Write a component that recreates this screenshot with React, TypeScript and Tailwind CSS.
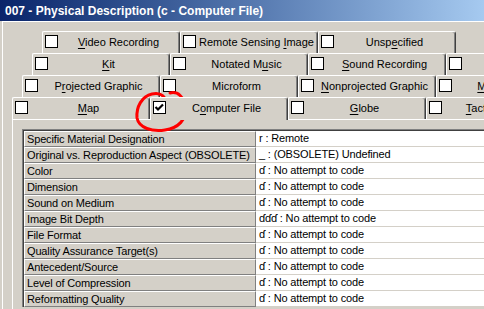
import React from "react";

type TabDef = { pre: string; u: string; post: string; active?: boolean };

const rows: TabDef[][] = [
  [
    { pre: "", u: "V", post: "ideo Recording" },
    { pre: "Remote Sensing ", u: "I", post: "mage" },
    { pre: "Unsp", u: "e", post: "cified" },
  ],
  [
    { pre: "", u: "K", post: "it" },
    { pre: "Notated M", u: "u", post: "sic" },
    { pre: "", u: "S", post: "ound Recording" },
    { pre: "", u: "T", post: "ext" },
  ],
  [
    { pre: "P", u: "r", post: "ojected Graphic" },
    { pre: "Microform", u: "", post: "" },
    { pre: "", u: "N", post: "onprojected Graphic" },
    { pre: "", u: "M", post: "otion Picture" },
  ],
  [
    { pre: "", u: "M", post: "ap" },
    { pre: "C", u: "o", post: "mputer File", active: true },
    { pre: "", u: "G", post: "lobe" },
    { pre: "", u: "T", post: "actile Material" },
  ],
];

const rowOffsets = ["ml-[39px]", "ml-[29px]", "ml-[19px]", "ml-[9px]"];

function Checkbox({ checked }: { checked?: boolean }) {
  return (
    <div className="w-[13px] h-[13px] shrink-0 border border-black bg-white flex items-center justify-center">
      {checked && (
        <svg width="11" height="11" viewBox="0 0 11 11">
          <path d="M1.5 5 L4 7.5 L9 2.5" stroke="#000" strokeWidth="2.2" fill="none" />
        </svg>
      )}
    </div>
  );
}

function Tab({ t }: { t: TabDef }) {
  return (
    <div
      className={
        "w-[138px] shrink-0 border-l border-t border-r border-l-white border-t-white border-r-[#404040] rounded-tl-[2px] rounded-tr-[3px] shadow-[inset_-1px_0_0_#808080] bg-[#D4D0C8] flex items-start pt-[3px] pl-[2px] " +
        (t.active ? "h-[23px] relative z-10" : "h-[22px]")
      }
    >
      <div className="flex items-center h-[13px] w-full">
        <Checkbox checked={t.active} />
        <span className="relative top-[1px] flex-1 text-center text-[11px] leading-[13px] text-black whitespace-nowrap">
          {t.pre}
          {t.u && <span className="underline underline-offset-[2px]">{t.u}</span>}
          {t.post}
        </span>
      </div>
    </div>
  );
}

const tableRows: [string, string][] = [
  ["Specific Material Designation", "r : Remote"],
  ["Original vs. Reproduction Aspect (OBSOLETE)", "_ : (OBSOLETE) Undefined"],
  ["Color", "ɗ : No attempt to code"],
  ["Dimension", "ɗ : No attempt to code"],
  ["Sound on Medium", "ɗ : No attempt to code"],
  ["Image Bit Depth", "ɗɗɗ : No attempt to code"],
  ["File Format", "ɗ : No attempt to code"],
  ["Quality Assurance Target(s)", "ɗ : No attempt to code"],
  ["Antecedent/Source", "ɗ : No attempt to code"],
  ["Level of Compression", "ɗ : No attempt to code"],
  ["Reformatting Quality", "ɗ : No attempt to code"],
];

export default function App() {
  return (
    <div className="relative w-[484px] h-[309px] overflow-hidden bg-[#D4D0C8] font-['Liberation_Sans','DejaVu_Sans',sans-serif] text-black">
      <div className="h-[21px] bg-gradient-to-r from-[#0A246A] to-[#A6CAF0] flex items-center pl-[5px]">
        <span className="text-white font-bold text-[12px] leading-none whitespace-nowrap">
          007 - Physical Description (c - Computer File)
        </span>
      </div>
      <div className="ml-[2px] border-l border-t border-white h-[288px] flex flex-col">
        <div className="mt-[9px] flex flex-col">
          {rows.map((r, i) => (
            <div key={i} className={"flex h-[22px] items-start " + rowOffsets[i]}>
              {r.map((t, j) => (
                <Tab key={j} t={t} />
              ))}
            </div>
          ))}
        </div>
        <div className="ml-[9px] flex-1 border-l border-t border-white pl-[9px] pt-[9px]">
          <div className="border-l border-t border-[#808080]">
            <div className="border-l border-t border-[#404040] text-[11px] tracking-[-0.15px]">
              {tableRows.map(([label, value], i) => (
                <div key={i} className="flex h-[16px]">
                  <div className="w-[232px] shrink-0 bg-[#D4D0C8] border-l border-t border-white border-b border-b-[#808080] border-r border-r-[#808080] pl-[2px] leading-[14px] whitespace-nowrap overflow-hidden">
                    {label}
                  </div>
                  <div className="flex-1 bg-white border-b border-[#D4D0C8] pl-[3px] leading-[15px] whitespace-nowrap">
                    {value}
                  </div>
                </div>
              ))}
            </div>
          </div>
        </div>
      </div>
      <svg
        className="absolute left-0 top-0 pointer-events-none"
        width="484"
        height="309"
        viewBox="0 0 484 309"
      >
        <path
          d="M167 106 C166 97, 162 92, 152 94 C142 96, 136 107, 137 118 C139 128, 152 132, 165 130 C178 128, 187 120, 185 107 C184 97, 178 91, 170 93"
          stroke="#FF0000"
          strokeWidth="3"
          fill="none"
          strokeLinecap="round"
        />
      </svg>
    </div>
  );
}
